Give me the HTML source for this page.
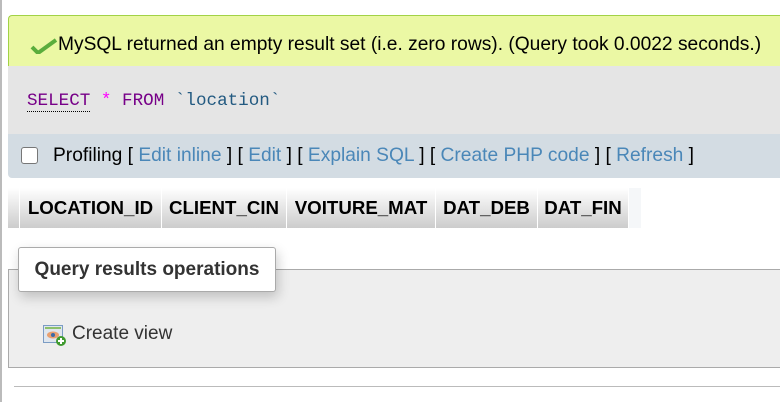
<!DOCTYPE html>
<html><head><meta charset="utf-8"><style>
body{margin:0;width:780px;height:402px;overflow:hidden;background:#fff;font-family:"Liberation Sans",Arial,sans-serif;position:relative}
.a{position:absolute}
.lb{left:0;top:0;width:2px;height:402px;background:#bbb}
.ok{left:8px;top:15px;width:800px;height:50px;background:#ebf8a4;border-top:1px solid #a2d246;border-left:1px solid #a2d246;border-radius:4px 0 0 0;font-size:19.2px;line-height:58px;color:#000;white-space:nowrap}
.sql{left:8px;top:66px;width:800px;height:68px;background:#e5e5e5}
.sqlt{left:27px;top:91px;font-family:"Liberation Mono",monospace;font-size:17.6px;color:#235a81}
.prof{left:8px;top:134px;width:800px;height:44px;background:#d3dce3;border-radius:0 0 0 4px;font-size:19.2px;line-height:44px;color:#000;white-space:nowrap}
.prof a{color:#4a87b8}
.cb{left:21px;top:147px;width:15px;height:15px;border:1px solid #777;border-radius:3px;background:#fff}
.th{top:188px;height:40px;background:linear-gradient(#fff,#ccc);font-weight:bold;font-size:18.7px;line-height:40px;text-align:center;color:#000;white-space:nowrap}
.leg{left:18px;top:247px;width:256px;height:43px;background:#fff;border:1px solid #aaa;border-radius:3px;box-shadow:2px 5px 12px rgba(0,0,0,.2);font-weight:bold;font-size:19px;line-height:43px;text-align:center;color:#333;z-index:2}
.fs{left:8px;top:269px;width:800px;height:97px;background:#eee;border:1px solid #aaa}
.cv{left:72px;top:323px;font-size:19px;color:#333}
.hr{left:14px;top:386px;width:780px;height:1px;background:#bbb}
</style></head><body>
<div class="a lb"></div>
<div class="a ok"><svg style="position:absolute;left:21px;top:22px" width="28" height="16" viewBox="0 0 28 16"><path d="M2 9l6 6L26 2" fill="none" stroke="#5aad3c" stroke-width="4" stroke-linejoin="round"/></svg><span style="margin-left:49px">MySQL returned an empty result set (i.e. zero rows). (Query took 0.0022 seconds.)</span></div>
<div class="a sql"></div>
<div class="a sqlt"><span style="color:#708;border-bottom:1px dotted #000">SELECT</span> <span style="color:#f0f">*</span> <span style="color:#708">FROM</span> `location`</div>
<div class="a prof"><span style="margin-left:45px">Profiling [ <a>Edit inline</a> ] [ <a>Edit</a> ] [ <a>Explain SQL</a> ] [ <a>Create PHP code</a> ] [ <a>Refresh</a> ]</span></div>
<div class="a cb"></div>
<div class="a th" style="left:8px;width:11px"></div>
<div class="a th" style="left:20px;width:141px">LOCATION_ID</div>
<div class="a th" style="left:162px;width:124px">CLIENT_CIN</div>
<div class="a th" style="left:287px;width:148px">VOITURE_MAT</div>
<div class="a th" style="left:436px;width:101px">DAT_DEB</div>
<div class="a th" style="left:538px;width:90px">DAT_FIN</div>
<div class="a th" style="left:629px;width:12px;background:#f5f7f9"></div>
<div class="a fs"></div>
<div class="a leg">Query results operations</div>
<svg class="a" style="left:43px;top:325px" width="24" height="22" viewBox="0 0 24 22"><rect x="0.5" y="0.5" width="19" height="17" fill="#dfe6ee" stroke="#7b9cc4"/><rect x="2" y="2" width="16" height="2" fill="#8cc06a"/><ellipse cx="10" cy="10" rx="6" ry="3.5" fill="#e8a070"/><circle cx="10" cy="10" r="2" fill="#3a6aa8"/><circle cx="18" cy="16" r="5" fill="#3f9a2f"/><path d="M18 13v6M15 16h6" stroke="#fff" stroke-width="2"/></svg>
<div class="a cv">Create view</div>
<div class="a hr"></div>
</body></html>
